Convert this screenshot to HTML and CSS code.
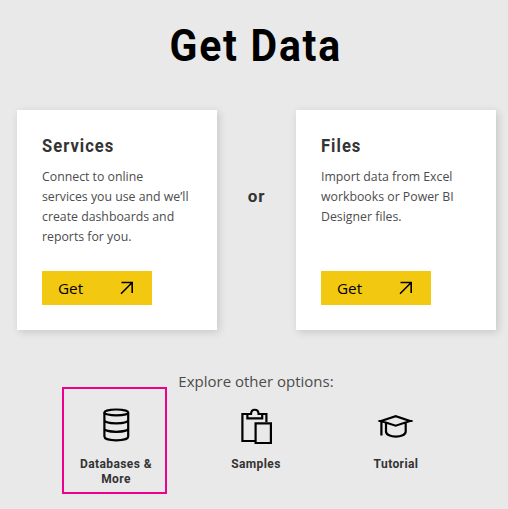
FILE: index.html
```html
<!DOCTYPE html>
<html lang="en">
<head>
<meta charset="utf-8">
<title>Get Data</title>
<link rel="stylesheet" href="styles.css">
</head>
<body>
<main class="page">
  <h1 class="title"><span>Get Data</span></h1>
  <div class="cards">
    <section class="card">
      <h2>Services</h2>
      <p>Connect to online<br>services you use and we’ll<br>create dashboards and<br>reports for you.</p>
      <button class="get"><span>Get</span>
        <svg width="14" height="14" viewBox="0 0 14 14"><path d="M1.5 1.5H12.2V12M12.2 1.5L1 12.7"/></svg>
      </button>
    </section>
    <div class="or">or</div>
    <section class="card">
      <h2>Files</h2>
      <p>Import data from Excel<br>workbooks or Power BI<br>Designer files.</p>
      <button class="get"><span>Get</span>
        <svg width="14" height="14" viewBox="0 0 14 14"><path d="M1.5 1.5H12.2V12M12.2 1.5L1 12.7"/></svg>
      </button>
    </section>
  </div>
  <p class="explore">Explore other options:</p>
  <nav class="options">
    <a class="option selected">
      <svg width="36" height="42" viewBox="0 0 36 42"><ellipse cx="18.3" cy="8.4" rx="11.9" ry="2.9"/><path d="M6.4 8.4V32.5C6.4 37.6 30.2 37.6 30.2 32.5V8.4M6.4 16C6.4 20.5 30.2 20.5 30.2 16M6.4 24.4C6.4 28.9 30.2 28.9 30.2 24.4"/></svg>
      <span class="label">Databases &amp;<br>More</span>
    </a>
    <a class="option">
      <svg width="40" height="42" viewBox="0 0 40 42"><path d="M19 37H6.4V10H15C15.3 4.3 22.3 4.3 22.6 10H30.4V18M11.4 10V14.4H26.2V10"/><path d="M19.6 19.4H34.9V39H19.6Z"/></svg>
      <span class="label">Samples</span>
    </a>
    <a class="option">
      <svg width="44" height="42" viewBox="0 0 44 42"><path d="M7 17L21.7 12.2L36 17L21.7 21.7ZM7.4 17V31.5M12 19V27.5C12 34.3 31.7 34.3 31.7 27.5V19"/><path d="M4.7 17H9M34 17H38.3"/></svg>
      <span class="label">Tutorial</span>
    </a>
  </nav>
</main>
</body>
</html>
```
FILE: styles.css
```css
* { box-sizing: border-box; }
body { margin: 0; background: #e9e9e9; color: #333; }
h1, h2, p { margin: 0; }
.page { width: 508px; height: 509px; overflow: hidden; font-family: "Open Sans", sans-serif; }
.title { height: 110px; padding-left: 4px; padding-top: 18px; text-align: center; font: 700 44.5px/56px Roboto, sans-serif; letter-spacing: 1.9px; color: #000; }
.title span { display: inline-block; transform: scaleX(.92); }
.cards { display: grid; grid-template-columns: 200px 79px 200px; padding-left: 17px; height: 220px; }
.card { display: flex; flex-direction: column; align-items: flex-start; padding: 25px 0 25px 25px; background: #fff; box-shadow: 2px 2px 8px rgba(0, 0, 0, .15); }
.card h2 { font: 700 18px/22px Roboto, sans-serif; letter-spacing: 1.1px; transform: scaleX(.92); transform-origin: left; }
.card p { margin-top: 10px; font-size: 12.3px; line-height: 20px; color: #4c4c4c; white-space: nowrap; }
.get { display: flex; align-items: center; justify-content: space-between; width: 110px; height: 34px; margin-top: auto; padding: 0 18px 0 16px; border: 0; background: #f2c811; color: #000; font: 15.3px/34px "Open Sans", sans-serif; }
.or { padding-top: 75px; text-align: center; font: 700 17px/22px Roboto, sans-serif; letter-spacing: .8px; }
svg { fill: none; stroke: #000; stroke-width: 2.2; }
.get svg { stroke-width: 1.6; }
.explore { height: 74px; padding-top: 39px; padding-left: 4px; text-align: center; font-size: 15px; line-height: 24px; color: #4c4c4c; }
.options { display: grid; grid-template-columns: repeat(3, 140px); padding-left: 46px; }
.option { position: relative; display: flex; flex-direction: column; align-items: center; text-align: center; }
.label { margin-top: 11px; font: 700 12px/15px Roboto, sans-serif; letter-spacing: .4px; }
.selected::after { content: ""; position: absolute; left: 16px; top: -17px; box-sizing: border-box; width: 105px; height: 107px; border: 2px solid #ec008c; }
```
